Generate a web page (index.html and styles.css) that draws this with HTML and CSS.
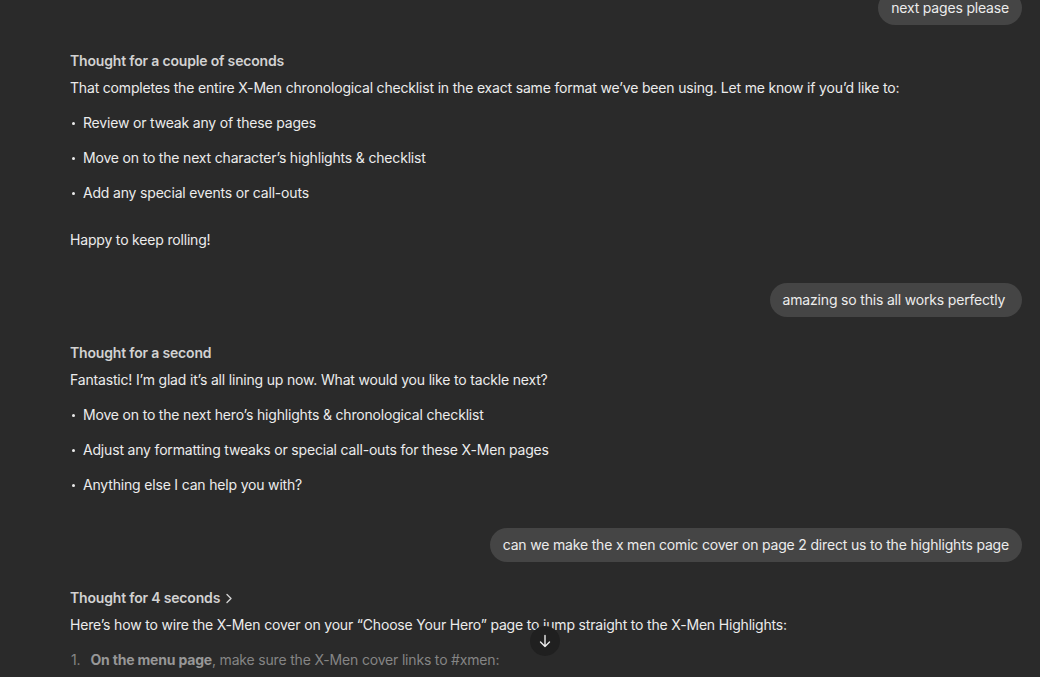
FILE: index.html
```html
<!DOCTYPE html>
<html lang="en">
<head>
<meta charset="utf-8">
<title>Chat</title>
<link rel="stylesheet" href="styles.css">
</head>
<body>
<main class="thread">
  <div class="user-row first"><div class="bubble">next pages please</div></div>

  <section class="assistant">
    <div class="thought">Thought for a couple of seconds</div>
    <p class="para">That completes the entire X-Men chronological checklist in the exact same format we’ve been using. Let me know if you’d like to:</p>
    <ul class="bullets">
      <li>Review or tweak any of these pages</li>
      <li>Move on to the next character’s highlights &amp; checklist</li>
      <li>Add any special events or call-outs</li>
    </ul>
    <p class="para closing">Happy to keep rolling!</p>
  </section>

  <div class="user-row"><div class="bubble">amazing so this all works perfectly&nbsp;</div></div>

  <section class="assistant">
    <div class="thought">Thought for a second</div>
    <p class="para">Fantastic! I’m glad it’s all lining up now. What would you like to tackle next?</p>
    <ul class="bullets">
      <li>Move on to the next hero’s highlights &amp; chronological checklist</li>
      <li>Adjust any formatting tweaks or special call-outs for these X-Men pages</li>
      <li>Anything else I can help you with?</li>
    </ul>
  </section>

  <div class="user-row"><div class="bubble">can we make the x men comic cover on page 2 direct us to the highlights page</div></div>

  <section class="assistant">
    <div class="thought">Thought for 4 seconds <svg class="chev" width="8" height="11" viewBox="0 0 8 11"><path d="M2 1.5l4 4-4 4" fill="none" stroke="currentColor" stroke-width="1.4" stroke-linecap="round" stroke-linejoin="round"/></svg></div>
    <p class="para">Here’s how to wire the X-Men cover on your “Choose Your Hero” page to jump straight to the X-Men Highlights:</p>
    <ol class="steps">
      <li><span class="num">1.</span><span><b>On the menu page</b>, make sure the X-Men cover links to #xmen:</span></li>
    </ol>
  </section>
</main>
<button class="scroll-down" aria-label="Scroll down"><svg width="12" height="14" viewBox="0 0 12 14"><path d="M6 1.5v11M1.5 8l4.5 4.5L10.5 8" fill="none" stroke="#ececec" stroke-width="1.4" stroke-linecap="round" stroke-linejoin="round"/></svg></button>
</body>
</html>
```

FILE: styles.css
```css
html, body {
  margin: 0;
  padding: 0;
  height: 100%;
  overflow: hidden;
  background: #2a2a2a;
}
body {
  font-family: Inter, "Noto Sans", "Liberation Sans", sans-serif;
  font-size: 14px;
  line-height: 20px;
  letter-spacing: -0.18px;
  color: #ececec;
  position: relative;
}
.thread {
  padding: 0 18px 0 70px;
  display: flex;
  flex-direction: column;
}
.user-row {
  display: flex;
  justify-content: flex-end;
  margin-top: 33px;
}
.user-row.first {
  margin-top: -9px;
}
.bubble {
  background: #454545;
  border-radius: 17px;
  padding: 7px 13px;
  line-height: 20px;
  color: #ececec;
}
.assistant {
  margin-top: 26px;
}
.thought {
  font-weight: 600;
  color: #d2d2d2;
  display: flex;
  align-items: center;
  gap: 5px;
}
.chev { color: #d2d2d2; }
.para {
  margin: 7px 0 0;
}
.para.closing {
  margin-top: 27px;
}
.bullets {
  list-style: none;
  margin: 0;
  padding: 0;
}
.bullets li {
  position: relative;
  padding-left: 13px;
  margin-top: 15px;
}
.bullets li::before {
  content: "";
  position: absolute;
  left: 2px;
  top: 9px;
  width: 3px;
  height: 3px;
  border-radius: 50%;
  background: #ececec;
}
.steps {
  list-style: none;
  margin: 15px 0 0;
  padding: 0;
  color: #858585;
}
.steps li {
  display: flex;
  gap: 10px;
  padding-left: 1px;
}
.steps b {
  color: #979797;
  font-weight: 700;
}
.scroll-down {
  position: absolute;
  left: 530px;
  top: 626px;
  width: 30px;
  height: 30px;
  border-radius: 50%;
  background: #202020;
  border: none;
  padding: 0;
  display: flex;
  align-items: center;
  justify-content: center;
}
```
